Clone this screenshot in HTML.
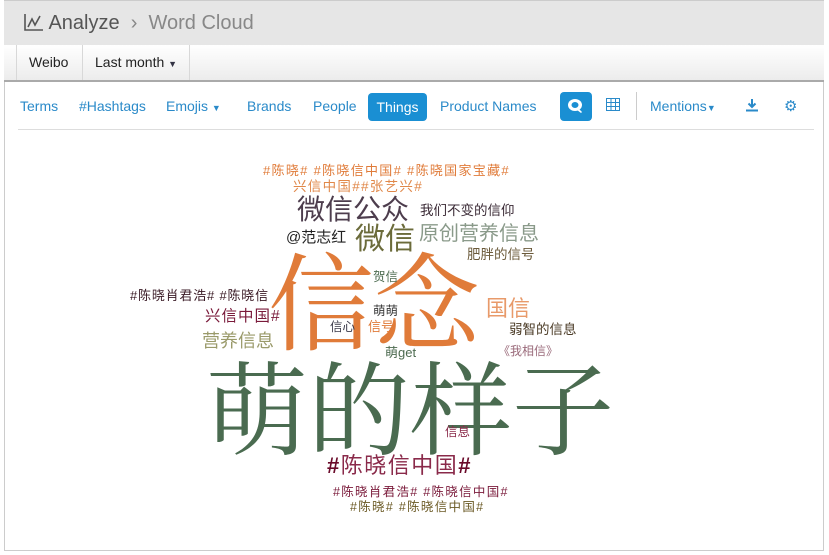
<!DOCTYPE html>
<html><head><meta charset="utf-8"><style>
*{margin:0;padding:0;box-sizing:border-box}
body{width:829px;height:555px;background:#fff;font-family:"Liberation Sans","Noto Sans CJK SC",sans-serif;position:relative;overflow:hidden}
.hdr{position:absolute;left:4px;top:0;width:820px;height:45px;background:#e6e6e6;border-top:1px solid #ccc}
.hdr .t{position:absolute;left:20px;top:11px;font-size:20px;color:#555}
.hdr .t span{color:#888}
.bar{position:absolute;left:4px;top:45px;width:820px;height:37px;background:linear-gradient(#fff,#ececec);border-bottom:2px solid #aaa}
.bar div{position:absolute;top:0;height:35px;line-height:35px;font-size:14px;color:#222;border-left:1px solid #d8d8d8;padding:0 12px}
.frame{position:absolute;left:4px;top:82px;width:820px;height:469px;border:1px solid #ccc;border-top:none}
.tb{position:absolute;top:98px;font-size:14px;color:#2a8ac9}
.things{position:absolute;left:368px;top:93px;width:59px;height:28px;background:#1a8fd3;border-radius:4px;color:#fff;font-size:14px;line-height:28px;text-align:center}
.line{position:absolute;left:18px;top:129px;width:796px;height:1px;background:#ddd}
.w{position:absolute;white-space:nowrap;line-height:1}
.s{font-family:"Noto Serif CJK SC",serif}
</style></head><body>
<div class="hdr"><div class="t"><svg width="20" height="18" viewBox="0 0 20 18" style="vertical-align:-2px"><path d="M1 1V17H19" stroke="#555" fill="none" stroke-width="1.6"/><path d="M4 14L8 6L11 12L16 3" stroke="#555" fill="none" stroke-width="1.6"/></svg> Analyze <span>&nbsp;›&nbsp; Word Cloud</span></div></div>
<div class="bar"><div style="left:12px">Weibo</div><div style="left:78px;border-right:1px solid #d8d8d8">Last month <span style="font-size:9px;color:#334">▼</span></div></div>
<div class="frame"></div>
<div class="tb" style="left:20px">Terms</div>
<div class="tb" style="left:79px">#Hashtags</div>
<div class="tb" style="left:166px">Emojis <span style="font-size:9px">▼</span></div>
<div class="tb" style="left:247px">Brands</div>
<div class="tb" style="left:313px">People</div>
<div class="things">Things</div>
<div class="tb" style="left:440px">Product Names</div>
<div style="position:absolute;left:560px;top:92px;width:32px;height:29px;background:#1a8fd3;border-radius:4px"><svg width="32" height="29" viewBox="0 0 32 29"><ellipse cx="15" cy="13" rx="7" ry="6" fill="#fff"/><ellipse cx="15" cy="13" rx="3.5" ry="3" fill="#1a8fd3"/><path d="M18 16l4 4-1 1-4-3z" fill="#fff"/></svg></div>
<svg style="position:absolute;left:606px;top:98px" width="14" height="13" viewBox="0 0 14 13"><rect x="0.5" y="0.5" width="13" height="12" fill="none" stroke="#2a8ac9"/><path d="M0 4.5H14M0 8.5H14M5 0V13M9.5 0V13" stroke="#2a8ac9"/></svg>
<div style="position:absolute;left:636px;top:92px;width:1px;height:28px;background:#ccc"></div>
<div class="tb" style="left:650px">Mentions<span style="font-size:9px">▼</span></div>
<svg style="position:absolute;left:745px;top:98px" width="14" height="14" viewBox="0 0 14 14"><path d="M7 1V9M3.5 5.5L7 9L10.5 5.5M1 12.5H13" stroke="#2a8ac9" stroke-width="2" fill="none"/></svg>
<div class="tb" style="left:784px;top:97px;font-size:15px">⚙</div>
<div class="line"></div>

<div class="w" style="left:263px;top:164px;font-size:13px;letter-spacing:1.3px;color:#e07b39">#陈晓# #陈晓信中国# #陈晓国家宝藏#</div>
<div class="w" style="left:293px;top:180px;font-size:13.5px;letter-spacing:1.3px;color:#e0884a">兴信中国##张艺兴#</div>
<div class="w" style="left:297px;top:196px;font-size:28px;color:#4d3d4d">微信公众</div>
<div class="w" style="left:420px;top:204px;font-size:13.5px;color:#3a2a35">我们不变的信仰</div>
<div class="w" style="left:286px;top:230px;font-size:15px;color:#222">@范志红</div>
<div class="w" style="left:355px;top:225px;font-size:30px;color:#6b6b3a">微信</div>
<div class="w" style="left:419px;top:224px;font-size:20px;color:#8a9a8a">原创营养信息</div>
<div class="w" style="left:467px;top:248px;font-size:13.5px;color:#6b5a3a">肥胖的信号</div>
<div class="w s" style="left:268px;top:244px;font-size:106px;color:#e07b39">信念</div>
<div class="w" style="left:373px;top:271px;font-size:12.5px;color:#4d6b50">贺信</div>
<div class="w" style="left:130px;top:289px;font-size:13px;letter-spacing:0.8px;color:#3a1a25">#陈晓肖君浩# #陈晓信</div>
<div class="w" style="left:205px;top:309px;font-size:15.5px;letter-spacing:1px;color:#7a1a3a">兴信中国#</div>
<div class="w" style="left:486px;top:298px;font-size:22px;color:#e89a6a">国信</div>
<div class="w" style="left:373px;top:305px;font-size:12.5px;color:#3a3a3a">萌萌</div>
<div class="w" style="left:330px;top:321px;font-size:12.5px;color:#3a3a4a">信心</div>
<div class="w" style="left:368px;top:320px;font-size:13px;color:#e07b39">信号</div>
<div class="w" style="left:509px;top:323px;font-size:13.5px;color:#4a3a25">弱智的信息</div>
<div class="w" style="left:202px;top:332px;font-size:18px;color:#9a9a6a">营养信息</div>
<div class="w" style="left:385px;top:346px;font-size:13px;color:#4d6b50">萌get</div>
<div class="w" style="left:498px;top:345px;font-size:12px;color:#9a6a7a">《我相信》</div>
<div class="w s" style="left:206px;top:353px;font-size:102px;color:#4a6b50">萌的样子</div>
<div class="w" style="left:445px;top:426px;font-size:12.5px;color:#8a2a4a">信息</div>
<div class="w" style="left:327px;top:455px;font-size:22px;letter-spacing:1.5px;color:#8a2a4a"><b style="color:#6a0a2a">#</b>陈晓信中国<b style="color:#6a0a2a">#</b></div>
<div class="w" style="left:333px;top:486px;font-size:12.5px;letter-spacing:1.3px;color:#7a1a3a">#陈晓肖君浩# #陈晓信中国#</div>
<div class="w" style="left:350px;top:501px;font-size:12.5px;letter-spacing:1.3px;color:#6b5a25">#陈晓# #陈晓信中国#</div>
</body></html>
